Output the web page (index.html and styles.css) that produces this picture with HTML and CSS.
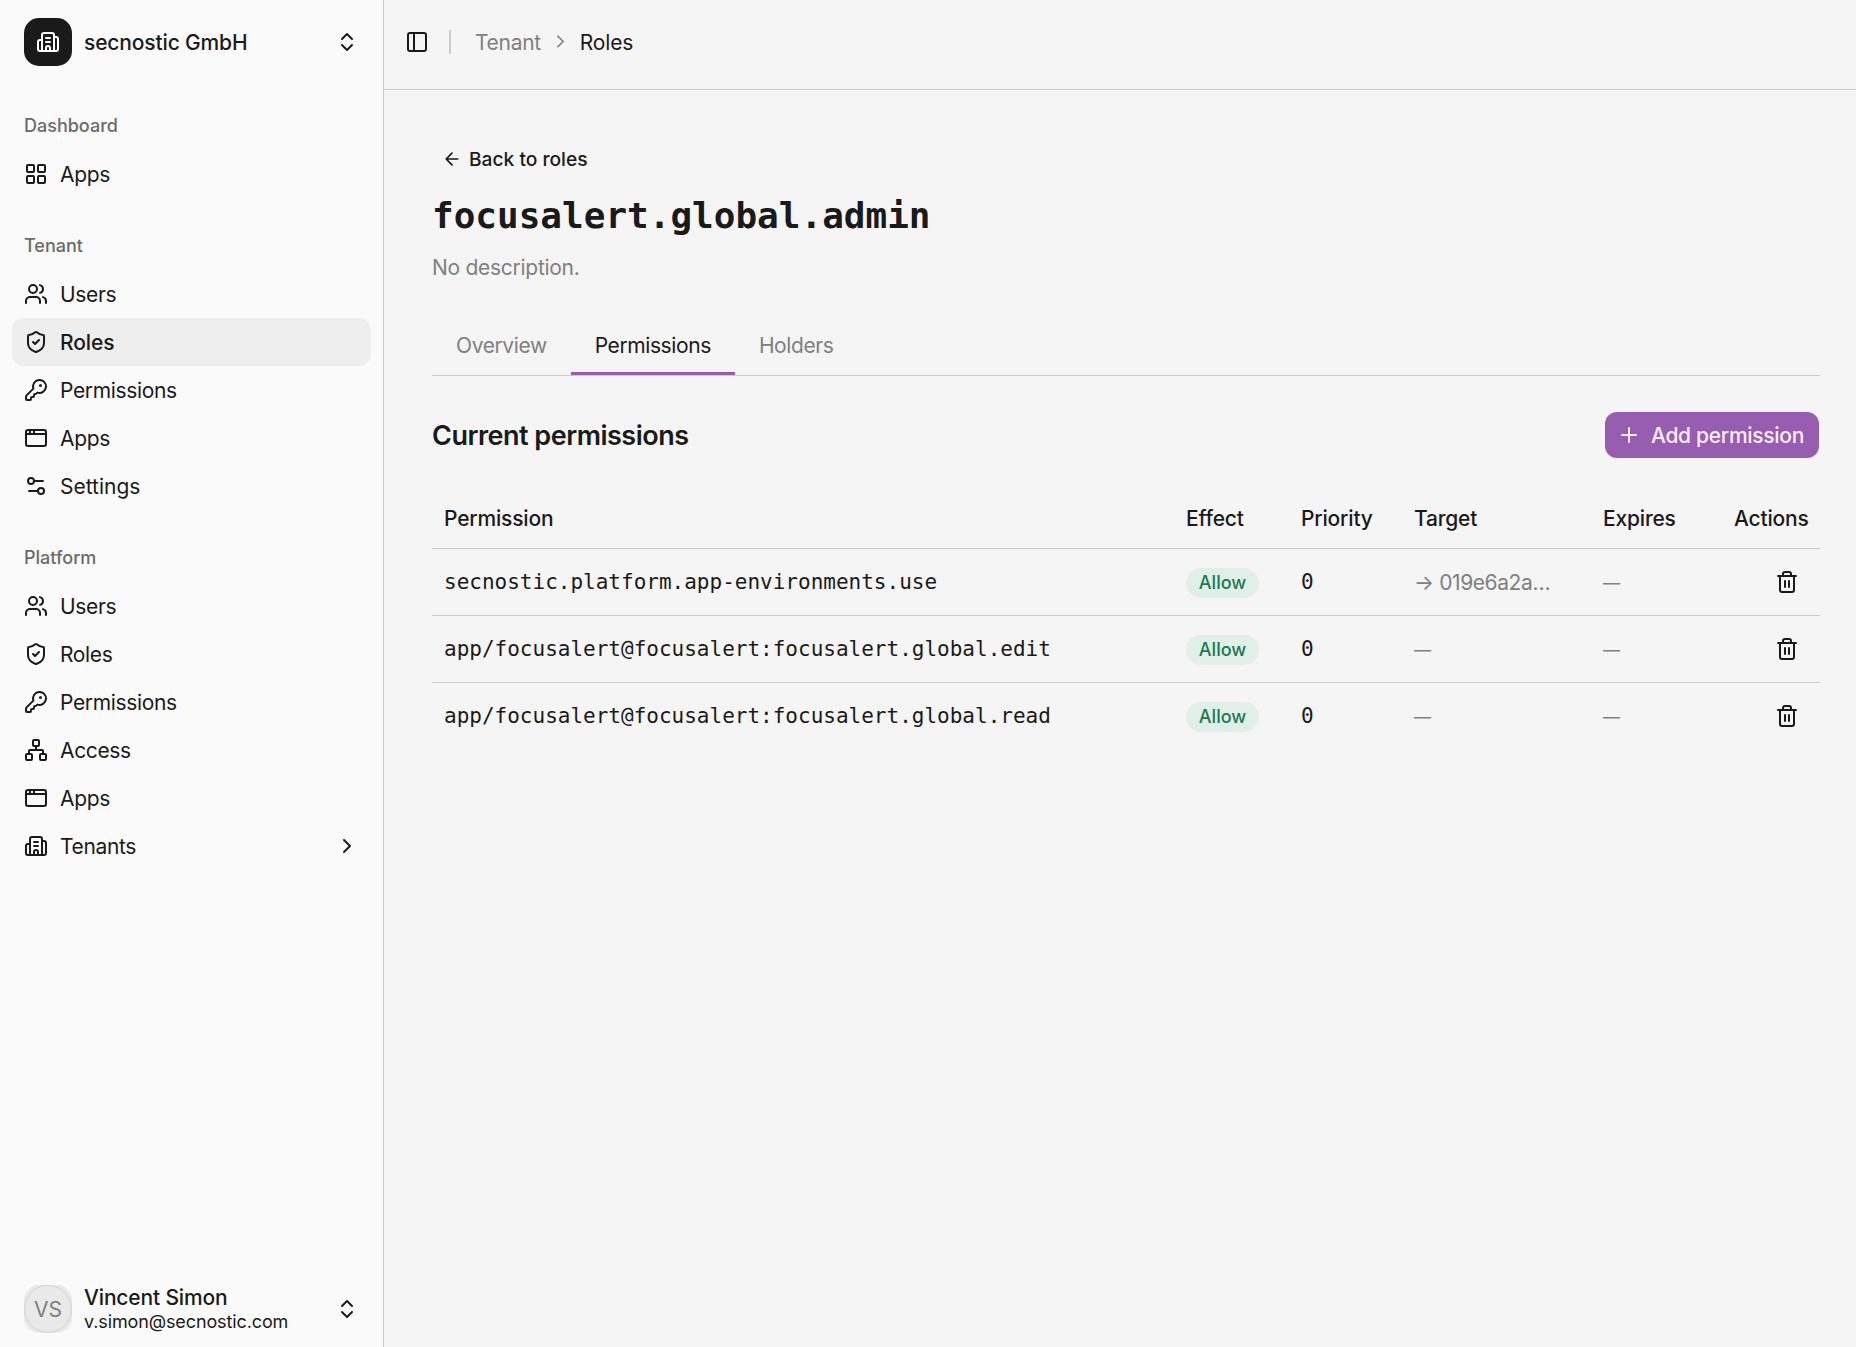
FILE: index.html
```html
<!DOCTYPE html>
<html lang="en">
<head>
    <meta charset="UTF-8">
    <meta name="viewport" content="width=device-width, initial-scale=1.0">
    <title>Roles</title>
    <link rel="stylesheet" href="styles.css">
</head>
<body>
    <!-- icon set, used with <use> below -->
    <svg class="sprite">
        <symbol id="building" viewBox="0 0 24 24"><path d="M10 12h4M10 8h4M14 21v-3a2 2 0 0 0-4 0v3M6 10H4a2 2 0 0 0-2 2v7a2 2 0 0 0 2 2h16a2 2 0 0 0 2-2V9a2 2 0 0 0-2-2h-2M6 21V5a2 2 0 0 1 2-2h8a2 2 0 0 1 2 2v16"/></symbol>
        <symbol id="updown" viewBox="0 0 24 24"><path d="m7 15 5 5 5-5M7 9l5-5 5 5"/></symbol>
        <symbol id="grid" viewBox="0 0 24 24"><rect x="3" y="3" width="7" height="7" rx="1"/><rect x="14" y="3" width="7" height="7" rx="1"/><rect x="14" y="14" width="7" height="7" rx="1"/><rect x="3" y="14" width="7" height="7" rx="1"/></symbol>
        <symbol id="users" viewBox="0 0 24 24"><path d="M16 21v-2a4 4 0 0 0-4-4H6a4 4 0 0 0-4 4v2M16 3.128a4 4 0 0 1 0 7.744M22 21v-2a4 4 0 0 0-3-3.87"/><circle cx="9" cy="7" r="4"/></symbol>
        <symbol id="shield" viewBox="0 0 24 24"><path d="M20 13c0 5-3.5 7.5-7.66 8.95a1 1 0 0 1-.67-.01C7.5 20.5 4 18 4 13V6a1 1 0 0 1 1-1c2 0 4.5-1.2 6.24-2.72a1.17 1.17 0 0 1 1.52 0C14.51 3.81 17 5 19 5a1 1 0 0 1 1 1z"/><path d="m9 12 2 2 4-4"/></symbol>
        <symbol id="key" viewBox="0 0 24 24"><path d="M2.586 17.414A2 2 0 0 0 2 18.828V21a1 1 0 0 0 1 1h3a1 1 0 0 0 1-1v-1a1 1 0 0 1 1-1h1a1 1 0 0 0 1-1v-1a1 1 0 0 1 1-1h.172a2 2 0 0 0 1.414-.586l.814-.814a6.5 6.5 0 1 0-4-4z"/><circle cx="16.5" cy="7.5" r=".5" fill="currentColor"/></symbol>
        <symbol id="window" viewBox="0 0 24 24"><rect x="2" y="4" width="20" height="16" rx="2"/><path d="M10 4v4M2 8h20M6 4v4"/></symbol>
        <symbol id="settings" viewBox="0 0 24 24"><path d="M14 17H5M19 7h-9"/><circle cx="17" cy="17" r="3"/><circle cx="7" cy="7" r="3"/></symbol>
        <symbol id="network" viewBox="0 0 24 24"><rect x="16" y="16" width="6" height="6" rx="1"/><rect x="2" y="16" width="6" height="6" rx="1"/><rect x="9" y="2" width="6" height="6" rx="1"/><path d="M5 16v-3a1 1 0 0 1 1-1h12a1 1 0 0 1 1 1v3M12 12V8"/></symbol>
        <symbol id="right" viewBox="0 0 24 24"><path d="m9 18 6-6-6-6"/></symbol>
        <symbol id="panel" viewBox="0 0 24 24"><rect x="3" y="3" width="18" height="18" rx="2"/><path d="M9 3v18"/></symbol>
        <symbol id="back" viewBox="0 0 24 24"><path d="m12 19-7-7 7-7M19 12H5"/></symbol>
        <symbol id="plus" viewBox="0 0 24 24"><path d="M5 12h14M12 5v14"/></symbol>
        <symbol id="trash" viewBox="0 0 24 24"><path d="M10 11v6M14 11v6M19 6v14a2 2 0 0 1-2 2H7a2 2 0 0 1-2-2V6M3 6h18M8 6V4a2 2 0 0 1 2-2h4a2 2 0 0 1 2 2v2"/></symbol>
    </svg>

    <div class="layout">
        <aside class="sidebar">
            <div class="switcher">
                <span class="logo"><svg class="icon"><use href="#building"/></svg></span>
                <span class="switcher-name">secnostic GmbH</span>
                <svg class="icon"><use href="#updown"/></svg>
            </div>

            <nav class="group">
                <div class="group-label">Dashboard</div>
                <a class="item"><svg class="icon"><use href="#grid"/></svg><span class="item-text">Apps</span></a>
            </nav>

            <nav class="group">
                <div class="group-label">Tenant</div>
                <a class="item"><svg class="icon"><use href="#users"/></svg><span class="item-text">Users</span></a>
                <a class="item active"><svg class="icon"><use href="#shield"/></svg><span class="item-text">Roles</span></a>
                <a class="item"><svg class="icon"><use href="#key"/></svg><span class="item-text">Permissions</span></a>
                <a class="item"><svg class="icon"><use href="#window"/></svg><span class="item-text">Apps</span></a>
                <a class="item"><svg class="icon"><use href="#settings"/></svg><span class="item-text wide">Settings</span></a>
            </nav>

            <nav class="group">
                <div class="group-label">Platform</div>
                <a class="item"><svg class="icon"><use href="#users"/></svg><span class="item-text">Users</span></a>
                <a class="item"><svg class="icon"><use href="#shield"/></svg><span class="item-text">Roles</span></a>
                <a class="item"><svg class="icon"><use href="#key"/></svg><span class="item-text">Permissions</span></a>
                <a class="item"><svg class="icon"><use href="#network"/></svg><span class="item-text">Access</span></a>
                <a class="item"><svg class="icon"><use href="#window"/></svg><span class="item-text">Apps</span></a>
                <a class="item"><svg class="icon"><use href="#building"/></svg><span class="item-text">Tenants</span><svg class="icon item-arrow"><use href="#right"/></svg></a>
            </nav>

            <div class="user">
                <span class="avatar"><span class="avatar-text">VS</span></span>
                <div class="user-info">
                    <span class="user-name">Vincent Simon</span>
                    <span class="user-mail">v.simon@secnostic.com</span>
                </div>
                <svg class="icon"><use href="#updown"/></svg>
            </div>
        </aside>

        <main class="main">
            <header class="topbar">
                <svg class="icon"><use href="#panel"/></svg>
                <span class="divider"></span>
                <span class="crumb">Tenant</span>
                <svg class="icon crumb-arrow"><use href="#right"/></svg>
                <span class="crumb current">Roles</span>
            </header>

            <section class="content">
                <a class="back"><svg class="icon"><use href="#back"/></svg>Back to roles</a>
                <h1 class="title">focusalert.global.admin</h1>
                <p class="description">No description.</p>

                <div class="tabs">
                    <a class="tab">Overview</a>
                    <a class="tab selected">Permissions</a>
                    <a class="tab">Holders</a>
                </div>

                <div class="section-head">
                    <h2 class="section-title">Current permissions</h2>
                    <button class="add"><svg class="icon"><use href="#plus"/></svg><span class="add-text">Add permission</span></button>
                </div>

                <table class="table">
                    <thead>
                        <tr>
                            <th class="col-permission">Permission</th>
                            <th class="col-effect">Effect</th>
                            <th class="col-priority">Priority</th>
                            <th class="col-target">Target</th>
                            <th class="col-expires">Expires</th>
                            <th class="col-actions">Actions</th>
                        </tr>
                    </thead>
                    <tbody>
                        <tr>
                            <td class="mono">secnostic.platform.app-environments.use</td>
                            <td><span class="badge">Allow</span></td>
                            <td class="mono">0</td>
                            <td class="muted">→ 019e6a2a…</td>
                            <td class="muted empty">—</td>
                            <td class="col-actions"><svg class="icon trash"><use href="#trash"/></svg></td>
                        </tr>
                        <tr>
                            <td class="mono">app/focusalert@focusalert:focusalert.global.edit</td>
                            <td><span class="badge">Allow</span></td>
                            <td class="mono">0</td>
                            <td class="muted empty">—</td>
                            <td class="muted empty">—</td>
                            <td class="col-actions"><svg class="icon trash"><use href="#trash"/></svg></td>
                        </tr>
                        <tr>
                            <td class="mono">app/focusalert@focusalert:focusalert.global.read</td>
                            <td><span class="badge">Allow</span></td>
                            <td class="mono">0</td>
                            <td class="muted empty">—</td>
                            <td class="muted empty">—</td>
                            <td class="col-actions"><svg class="icon trash"><use href="#trash"/></svg></td>
                        </tr>
                    </tbody>
                </table>
            </section>
        </main>
    </div>
</body>
</html>
```

FILE: styles.css
```css
* {
    box-sizing: border-box;
}
body {
    margin: 0;
    font-family: Inter, "Liberation Sans", sans-serif;
    font-size: 21px;
    line-height: 30px;
    color: #1a1a1a;
    background-color: #f5f5f5;
}
.sprite {
    display: none;
}
.icon {
    width: 24px;
    height: 24px;
    flex-shrink: 0;
    fill: none;
    stroke: currentColor;
    stroke-width: 2;
    stroke-linecap: round;
    stroke-linejoin: round;
}
.layout {
    display: flex;
    height: 1347px;
}

/* sidebar */
.sidebar {
    display: flex;
    flex-direction: column;
    width: 384px;
    background-color: #fafafa;
    border-right: 1px solid #cbcbcb;
}
.switcher {
    display: flex;
    align-items: center;
    gap: 12px;
    padding: 18px 24px 24px;
}
.logo {
    display: flex;
    align-items: center;
    justify-content: center;
    width: 48px;
    height: 48px;
    color: #fff;
    background-color: #1a1a1a;
    border-radius: 15px;
}
.switcher-name {
    flex: 1;
    padding-top: 2px;
    font-weight: 500;
    letter-spacing: -0.15px;
}
.group {
    padding: 12px;
}
.group-label {
    height: 48px;
    padding: 0 12px;
    font-size: 18px;
    font-weight: 500;
    line-height: 48px;
    color: #6a6a6a;
}
.item {
    display: flex;
    align-items: center;
    gap: 12px;
    height: 48px;
    padding: 0 12px;
    border-radius: 12px;
}
.item-text {
    padding-top: 2px;
    letter-spacing: -0.35px;
}
.item-text.wide {
    letter-spacing: 0;
}
.item.active {
    font-weight: 500;
    background-color: #eeeeee;
}
.item.active .item-text {
    letter-spacing: -0.1px;
}
.item-arrow {
    margin-left: auto;
}
.user {
    display: flex;
    align-items: center;
    gap: 12px;
    margin-top: auto;
    padding: 0 24px 14px;
}
.avatar {
    width: 48px;
    height: 48px;
    background-color: #e9e9e9;
    border-radius: 15px;
}
.avatar-text {
    display: block;
    height: 48px;
    line-height: 48px;
    text-align: center;
    color: #808080;
    border: 1px solid #d4d4d4;
    border-radius: 50%;
}
.user-info {
    display: flex;
    flex: 1;
    flex-direction: column;
}
.user-name {
    font-weight: 500;
    line-height: 26px;
    letter-spacing: -0.15px;
}
.user-mail {
    font-size: 18px;
    line-height: 22px;
    letter-spacing: -0.12px;
}

/* main */
.main {
    flex: 1;
}
.topbar {
    display: flex;
    align-items: center;
    height: 90px;
    padding: 0 21px 6px;
    border-bottom: 1px solid #cbcbcb;
}
.divider {
    width: 2px;
    height: 24px;
    margin: 0 24px 0 20px;
    background-color: #cbcbcb;
}
.crumb {
    padding-top: 2px;
    letter-spacing: -0.3px;
    color: #808080;
}
.crumb.current {
    color: #1a1a1a;
    letter-spacing: -0.2px;
}
.crumb-arrow {
    width: 21px;
    height: 21px;
    margin: 0 9px;
    color: #808080;
}
.content {
    padding: 48px 36px 0 48px;
}
.back {
    display: flex;
    align-items: center;
    gap: 7px;
    height: 42px;
    padding: 0 10px;
    font-size: 19.2px;
    font-weight: 500;
}
.back .icon {
    width: 20px;
    height: 20px;
}
.title {
    margin: 12px 0 0;
    font-family: "DejaVu Sans Mono", monospace;
    font-size: 36px;
    font-weight: 700;
    line-height: 48px;
}
.description {
    margin: 13px 0 0;
    letter-spacing: -0.28px;
    color: #808080;
}
.tabs {
    display: flex;
    margin-top: 33px;
    border-bottom: 1px solid #cbcbcb;
}
.tab {
    height: 59px;
    padding: 15px 24px 0;
    letter-spacing: -0.4px;
    color: #808080;
}
.tab.selected {
    color: #1a1a1a;
    border-bottom: 3px solid #975db0;
}
.section-head {
    display: flex;
    align-items: center;
    justify-content: space-between;
    margin-top: 36px;
}
.section-title {
    margin: 0;
    padding-top: 2px;
    font-size: 27px;
    font-weight: 600;
    letter-spacing: -0.5px;
}
.add {
    display: flex;
    align-items: center;
    gap: 10px;
    width: 214px;
    height: 46px;
    margin-right: 1px;
    padding: 0 0 0 12px;
    font: inherit;
    font-weight: 500;
    letter-spacing: -0.3px;
    white-space: nowrap;
    color: #fbeeff;
    background-color: #975db0;
    border: 0;
    border-radius: 12px;
}
.add-text {
    padding-top: 2px;
}

/* permissions table */
.table {
    width: 1388px;
    margin-top: 30px;
    border-collapse: separate;
    border-spacing: 0;
    table-layout: fixed;
}
.table th {
    height: 61px;
    padding: 2px 12px 0;
    font-weight: 500;
    letter-spacing: -0.18px;
    text-align: left;
    border-bottom: 1px solid #cbcbcb;
}
.table td {
    height: 67px;
    padding: 0 12px;
    border-bottom: 1px solid #cbcbcb;
}
.table tr:last-child td {
    border-bottom-color: transparent;
}
.table thead tr:last-child th {
    border-bottom-color: #cbcbcb;
}
.table .mono {
    font-family: "DejaVu Sans Mono", monospace;
}
.table .muted {
    padding-top: 2px;
    letter-spacing: -0.4px;
    color: #808080;
}
.table .empty {
    font-size: 17px;
}
.col-effect {
    width: 115px;
}
.col-priority {
    width: 113px;
}
.col-target {
    width: 189px;
}
.col-expires {
    width: 131px;
}
.col-actions {
    width: 98px;
}
.table .col-actions {
    text-align: right;
}
.badge {
    display: block;
    width: 73px;
    height: 30px;
    margin-top: 2px;
    font-size: 18px;
    font-weight: 500;
    line-height: 30px;
    text-align: center;
    color: #1b7a52;
    background-color: #e0f0e9;
    border-radius: 15px;
}
.trash {
    display: block;
    margin: 0 9px 0 auto;
}
```
